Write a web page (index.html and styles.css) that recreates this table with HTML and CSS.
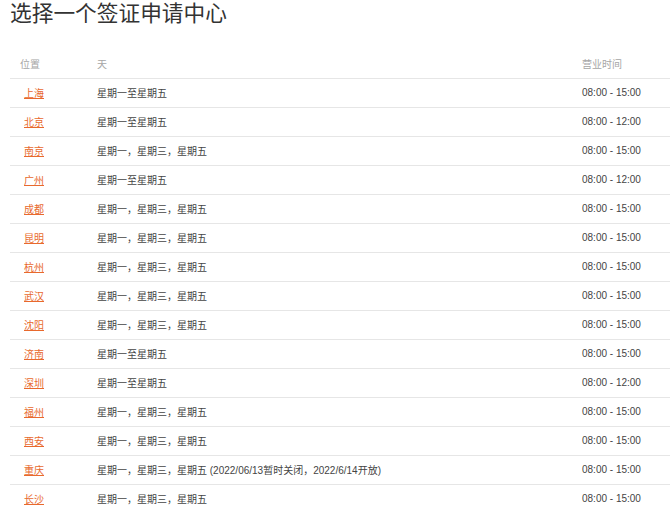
FILE: index.html
```html
<!DOCTYPE html>
<html>

<head>
  <title>选择一个签证申请中心</title>
  <link rel="stylesheet" href="styles.css">
</head>

<body>
  <div class="container">
    <h1>选择一个签证申请中心</h1>

    <table class="centers">
      <thead>
        <tr>
          <th class="col-loc">位置</th>
          <th class="col-days">天</th>
          <th class="col-hours">营业时间</th>
        </tr>
      </thead>
      <tbody>
        <tr><td><a href="#">上海</a></td><td>星期一至星期五</td><td>08:00 - 15:00</td></tr>
        <tr><td><a href="#">北京</a></td><td>星期一至星期五</td><td>08:00 - 12:00</td></tr>
        <tr><td><a href="#">南京</a></td><td>星期一，星期三，星期五</td><td>08:00 - 15:00</td></tr>
        <tr><td><a href="#">广州</a></td><td>星期一至星期五</td><td>08:00 - 12:00</td></tr>
        <tr><td><a href="#">成都</a></td><td>星期一，星期三，星期五</td><td>08:00 - 15:00</td></tr>
        <tr><td><a href="#">昆明</a></td><td>星期一，星期三，星期五</td><td>08:00 - 15:00</td></tr>
        <tr><td><a href="#">杭州</a></td><td>星期一，星期三，星期五</td><td>08:00 - 15:00</td></tr>
        <tr><td><a href="#">武汉</a></td><td>星期一，星期三，星期五</td><td>08:00 - 15:00</td></tr>
        <tr><td><a href="#">沈阳</a></td><td>星期一，星期三，星期五</td><td>08:00 - 15:00</td></tr>
        <tr><td><a href="#">济南</a></td><td>星期一至星期五</td><td>08:00 - 15:00</td></tr>
        <tr><td><a href="#">深圳</a></td><td>星期一至星期五</td><td>08:00 - 12:00</td></tr>
        <tr><td><a href="#">福州</a></td><td>星期一，星期三，星期五</td><td>08:00 - 15:00</td></tr>
        <tr><td><a href="#">西安</a></td><td>星期一，星期三，星期五</td><td>08:00 - 15:00</td></tr>
        <tr><td><a href="#">重庆</a></td><td>星期一，星期三，星期五 (2022/06/13暂时关闭，2022/6/14开放)</td><td>08:00 - 15:00</td></tr>
        <tr><td><a href="#">长沙</a></td><td>星期一，星期三，星期五</td><td>08:00 - 15:00</td></tr>
      </tbody>
    </table>
  </div>
</body>

</html>
```

FILE: styles.css
```css
* {
  box-sizing: border-box;
  margin: 0;
  padding: 0;
}

body {
  font-family: "Liberation Sans", "Noto Sans CJK SC", sans-serif;
  color: #444;
  background: #fff;
}

.container {
  padding: 0 0 0 10px;
}

h1 {
  font-size: 21.7px;
  font-weight: normal;
  line-height: 28px;
  color: #333;
  margin-bottom: 21px;
}

.centers {
  width: 100%;
  border-collapse: collapse;
  font-size: 10px;
}

.centers th {
  font-weight: normal;
  color: #a6a6a6;
  text-align: left;
  height: 29px;
  padding: 0 10px;
}

.centers td {
  height: 29px;
  padding: 0 10px;
  border-top: 1px solid #e6e6e6;
  color: #444;
}

.col-loc {
  width: 77px;
}

.col-hours {
  width: 98px;
}

.centers a {
  color: #e8692d;
  padding: 0 4px;
}
```
